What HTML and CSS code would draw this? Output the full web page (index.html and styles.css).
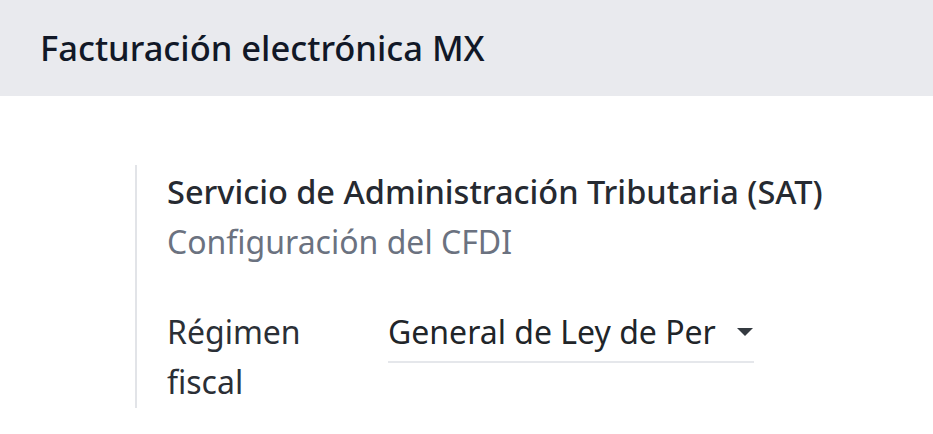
FILE: index.html
```html
<!DOCTYPE html>
<html lang="es">
<head>
<meta charset="utf-8">
<link rel="stylesheet" href="styles.css">
</head>
<body>
<div class="app-header">
  <h2 class="app-title">Facturación electrónica MX</h2>
</div>
<div class="settings">
  <div class="setting-box">
    <div class="setting-title">Servicio de Administración Tributaria (SAT)</div>
    <div class="setting-help">Configuración del CFDI</div>
    <div class="field-row">
      <label class="field-label">Régimen fiscal</label>
      <div class="select">
        <span class="select-value">General de Ley de Per</span>
        <span class="caret"></span>
      </div>
    </div>
  </div>
</div>
</body>
</html>
```
FILE: styles.css
```css
html, body {
  margin: 0;
  padding: 0;
  background: #ffffff;
}
body {
  font-family: "Noto Sans", "Open Sans", sans-serif;
  color: #212529;
}
.app-header {
  height: 96px;
  background: #e9eaee;
  display: flex;
  align-items: center;
  padding-left: 40px;
}
.app-title {
  margin: 0;
  font-size: 34.5px;
  font-weight: 500;
  color: #111827;
  line-height: 1;
}
.settings {
  padding: 69px 0 0 135px;
}
.setting-box {
  border-left: 2px solid #e2e4e8;
  padding: 2px 0 1px 30px;
  width: 700px;
}
.setting-title {
  font-size: 32.5px;
  font-weight: 500;
  line-height: 50px;
  color: #262a31;
}
.setting-help {
  font-size: 32px;
  line-height: 50px;
  color: #6b7280;
}
.field-row {
  display: flex;
  align-items: flex-start;
  gap: 31px;
  margin-top: 40px;
}
.field-label {
  flex: 0 0 190px;
  font-size: 32px;
  line-height: 50px;
  color: #2b2f36;
}
.select {
  width: 366px;
  padding-bottom: 4px;
  display: flex;
  align-items: center;
  justify-content: space-between;
  border-bottom: 2px solid #e5e7eb;
}
.select-value {
  font-size: 32px;
  line-height: 50px;
  color: #212529;
  white-space: nowrap;
}
.caret {
  width: 0;
  height: 0;
  border-left: 8px solid transparent;
  border-right: 8px solid transparent;
  border-top: 8px solid #343a40;
  margin-right: 1px;
}
```
